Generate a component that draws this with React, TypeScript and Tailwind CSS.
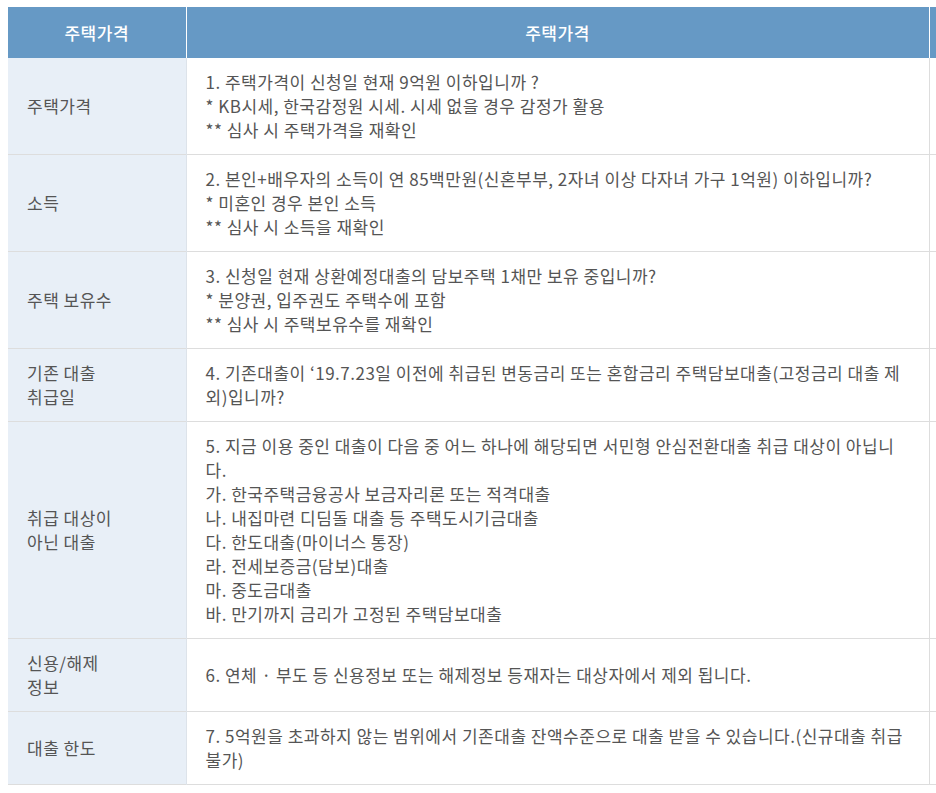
const rows: { label: string[]; lines: string[] }[] = [
  {
    label: ['주택가격'],
    lines: [
      '1. 주택가격이 신청일 현재 9억원 이하입니까 ?',
      '* KB시세, 한국감정원 시세. 시세 없을 경우 감정가 활용',
      '** 심사 시 주택가격을 재확인',
    ],
  },
  {
    label: ['소득'],
    lines: [
      '2. 본인+배우자의 소득이 연 85백만원(신혼부부, 2자녀 이상 다자녀 가구 1억원) 이하입니까?',
      '* 미혼인 경우 본인 소득',
      '** 심사 시 소득을 재확인',
    ],
  },
  {
    label: ['주택 보유수'],
    lines: [
      '3. 신청일 현재 상환예정대출의 담보주택 1채만 보유 중입니까?',
      '* 분양권, 입주권도 주택수에 포함',
      '** 심사 시 주택보유수를 재확인',
    ],
  },
  {
    label: ['기존 대출', '취급일'],
    lines: [
      '4. 기존대출이 ‘19.7.23일 이전에 취급된 변동금리 또는 혼합금리 주택담보대출(고정금리 대출 제외)입니까?',
    ],
  },
  {
    label: ['취급 대상이', '아닌 대출'],
    lines: [
      '5. 지금 이용 중인 대출이 다음 중 어느 하나에 해당되면 서민형 안심전환대출 취급 대상이 아닙니다.',
      '가. 한국주택금융공사 보금자리론 또는 적격대출',
      '나. 내집마련 디딤돌 대출 등 주택도시기금대출',
      '다. 한도대출(마이너스 통장)',
      '라. 전세보증금(담보)대출',
      '마. 중도금대출',
      '바. 만기까지 금리가 고정된 주택담보대출',
    ],
  },
  {
    label: ['신용/해제', '정보'],
    lines: ['6. 연체 · 부도 등 신용정보 또는 해제정보 등재자는 대상자에서 제외 됩니다.'],
  },
  {
    label: ['대출 한도'],
    lines: ['7. 5억원을 초과하지 않는 범위에서 기존대출 잔액수준으로 대출 받을 수 있습니다.(신규대출 취급 불가)'],
  },
];

export default function App() {
  return (
    <div
      className="w-[936px] h-[793px] overflow-hidden bg-white pt-[7px] pl-2"
      style={{ fontFamily: '"Noto Sans CJK KR", "Noto Sans", sans-serif' }}
    >
      <table className="w-[960px] table-fixed border-collapse text-[17px] leading-6 tracking-[0.5px] text-[#555]">
        <colgroup>
          <col className="w-[178px]" />
          <col className="w-[743px]" />
          <col />
        </colgroup>
        <thead>
          <tr className="h-[51px] bg-[#6699c5] text-white">
            <th className="border-r border-white font-medium">주택가격</th>
            <th className="border-r border-white font-medium">주택가격</th>
            <th />
          </tr>
        </thead>
        <tbody>
          {rows.map((row, i) => (
            <tr key={i} className="border-b border-[#dddddd]">
              <td className="bg-[#e8eff7] border-r border-[#dde3ea] pl-[19px] pr-4 py-3 align-middle">
                {row.label.map((l, j) => (
                  <div key={j}>{l}</div>
                ))}
              </td>
              <td className="border-r border-[#dddddd] pl-[19px] pr-5 py-3 align-middle">
                {row.lines.map((l, j) => (
                  <div key={j}>{l}</div>
                ))}
              </td>
              <td />
            </tr>
          ))}
        </tbody>
      </table>
    </div>
  );
}
